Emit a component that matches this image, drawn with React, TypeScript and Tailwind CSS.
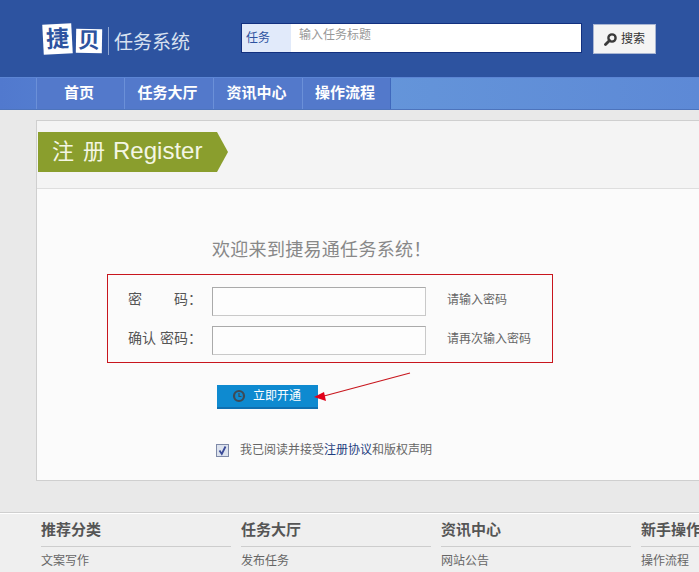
import React from "react";

const cjk = "font-['Liberation_Sans','Noto_Sans_CJK_SC',sans-serif]";

const navItems = [
  { t: "首页", w: "w-[88px]" },
  { t: "任务大厅", w: "w-[89px]" },
  { t: "资讯中心", w: "w-[89px]" },
  { t: "操作流程", w: "w-[88px]" },
];

const footer = [
  { t: "推荐分类", i: "文案写作" },
  { t: "任务大厅", i: "发布任务" },
  { t: "资讯中心", i: "网站公告" },
  { t: "新手操作", i: "操作流程" },
];

function Field({ label, hint, mt }: { label: React.ReactNode; hint: string; mt: string }) {
  return (
    <div className={`flex items-center ${mt}`}>
      <div className="w-[104px] shrink-0 pl-[20px] text-[14px] leading-[25px] mb-[4px] text-[#555] whitespace-nowrap">{label}</div>
      <div className="w-[214px] shrink-0 h-[29px] bg-[#fdfdfd] border border-[#c9c9c9] border-t-[#aaa] border-l-[#aaa]" />
      <div className="ml-[21px] text-[12px] leading-[25px] mb-[2px] text-[#666] whitespace-nowrap">{hint}</div>
    </div>
  );
}

export default function App() {
  return (
    <div className={`w-[699px] h-[572px] overflow-hidden bg-[#e9e9e9] ${cjk}`}>
      <header className="h-[77px] bg-[#2d53a0] flex">
        <div className="w-[241px] shrink-0 flex items-start pt-[24px] pl-[43px]">
          <span className="w-[29px] h-[30px] bg-white text-[#2d53a0] text-[23px] leading-[30px] font-bold text-center -rotate-3">捷</span>
          <span className="ml-[4px] mt-[5px] w-[26px] h-[24px] bg-white text-[#2d53a0] text-[22px] leading-[24px] font-bold text-center rotate-1">贝</span>
          <span className="ml-[6px] mt-[3px] w-px h-[28px] bg-[#8ea6d2]" />
          <span className="ml-[5px] mt-[6px] text-[19px] leading-[26px] text-[#d8e1f0] whitespace-nowrap">任务系统</span>
        </div>
        <div className="mt-[23px] w-[341px] h-[30px] flex border border-[#12307f] bg-white shrink-0">
          <div className="w-[49px] bg-[#e1eafa] text-[12px] leading-[28px] pl-[4px] text-[#2d53a0]">任务</div>
          <div className="pl-[8px] text-[12px] leading-[22px] text-[#999]">输入任务标题</div>
        </div>
        <div className="ml-[11px] mt-[24px] w-[63px] h-[30px] bg-[#f4f4f4] border border-[#a9b6d3] flex items-center pl-[10px] text-[12px] text-[#333] shrink-0">
          <svg width="13" height="13" viewBox="0 0 13 13" className="mr-[4px]">
            <circle cx="8" cy="5" r="3.6" fill="none" stroke="#3a3a3a" strokeWidth="2.4" />
            <path d="M5.5 7.5 L1.5 11.5" stroke="#3a3a3a" strokeWidth="2.8" strokeLinecap="round" />
          </svg>
          搜索
        </div>
      </header>

      <nav className="h-[33px] bg-gradient-to-r from-[#5179ce] via-[#6596da] to-[#5d89d6] border-y border-y-[#5c85d4] border-b-[#4d74bc] pl-[36px] flex">
        {navItems.map((n) => (
          <div
            key={n.t}
            className={`${n.w} pr-[3px] bg-[#5379cb] border-l border-l-[#6b90d8] text-center text-[15px] font-bold leading-[30px] text-white`}
          >
            {n.t}
          </div>
        ))}
        <div className="w-px bg-[#3f68bd]" />
      </nav>

      <main className="mt-[10px] ml-[36px] w-[700px] h-[361px] border border-[#cfcfcf] bg-[#fbfbfb]">
        <div className="h-[68px] bg-[#f4f4f4] border-b border-b-[#dedede] pt-[11px] pl-px">
          <div className="w-[190px] h-[40px] bg-[#8a9e2d] [clip-path:polygon(0_0,179px_0,190px_50%,179px_100%,0_100%)] pl-[14px] text-[24px] leading-[38px] text-[#f4f6e4] whitespace-nowrap">
            <span className="text-[22px] mr-[9px]">注</span>
            <span className="text-[22px] mr-[8px]">册</span>
            <span>Register</span>
          </div>
        </div>
        <div className="pt-[49px]">
          <div className="ml-[175px] text-[18px] leading-[24px] tracking-[0.3px] text-[#888]">欢迎来到捷易通任务系统！</div>
          <div className="relative">
            <div className="ml-[70px] mt-[12px] w-[446px] h-[89px] border border-[#c8161d] pt-[12px]">
              <Field
                mt=""
                hint="请输入密码"
                label={
                  <span className="flex w-[74px] justify-between">
                    <span>密</span>
                    <span>码：</span>
                  </span>
                }
              />
              <Field mt="mt-[10px]" hint="请再次输入密码" label="确认 密码：" />
            </div>
            <svg width="100" height="32" viewBox="0 0 100 32" className="absolute left-[275px] top-[97px]">
              <path d="M98 2 L12 25" stroke="#c8161d" strokeWidth="1.2" fill="none" />
              <path d="M2 26 L12 21 L14 30 Z" fill="#e2001a" />
            </svg>
          </div>
          <div className="ml-[180px] mt-[22px] w-[101px] h-[24px] bg-[#0e8ad0] border-b-2 border-b-[#0f6fb0] flex items-center text-[12px] text-white pl-[15px]">
            <svg width="14" height="14" viewBox="0 0 14 14" className="mr-[7px]">
              <circle cx="7" cy="7" r="5" fill="none" stroke="#3f4a55" strokeWidth="2.2" />
              <path d="M7 4 V7.5 H9.5" fill="none" stroke="#3f4a55" strokeWidth="1.2" />
            </svg>
            立即开通
          </div>
          <div className="ml-[179px] mt-[32px] flex items-center text-[12px] text-[#666]">
            <span className="w-[13px] h-[13px] bg-[#dde3ee] border border-[#7f8aa8] flex items-center justify-center">
              <svg width="11" height="11" viewBox="0 0 11 11">
                <path d="M2.5 5.5 L4.8 9 L8.5 1.5" fill="none" stroke="#3a4a98" strokeWidth="1.8" />
              </svg>
            </span>
            <span className="ml-[11px]">
              我已阅读并接受<span className="text-[#1f3f80]">注册协议</span>和版权声明
            </span>
          </div>
        </div>
      </main>

      <footer className="mt-[31px] h-[60px] bg-[#efefef] border-t border-t-[#cfcfcf] pl-[41px] flex gap-[10px] shadow-[inset_0_1px_0_#fff]">
        {footer.map((c) => (
          <div key={c.t} className="w-[190px] shrink-0">
            <div className="mt-[8px] h-[26px] border-b border-b-[#cdcdcd] text-[15px] leading-[18px] font-bold text-[#555]">{c.t}</div>
            <div className="mt-[6px] text-[12px] leading-[16px] text-[#666]">{c.i}</div>
          </div>
        ))}
      </footer>
    </div>
  );
}
